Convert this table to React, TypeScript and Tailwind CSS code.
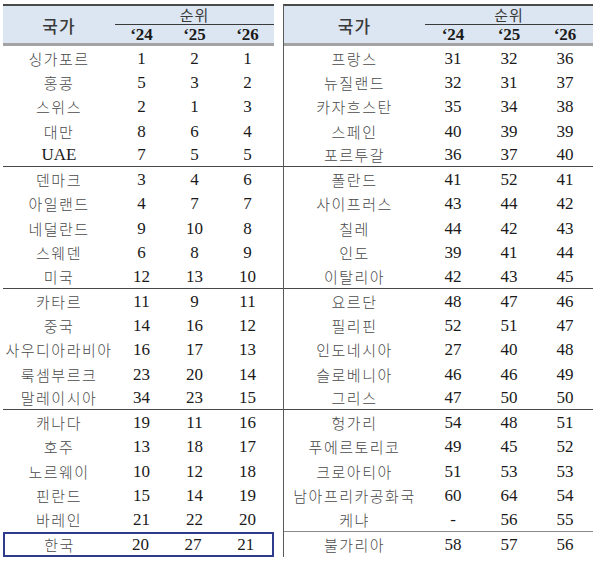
type Row = [string, string, string, string];

const LEFT: Row[] = [
  ['싱가포르', '1', '2', '1'],
  ['홍콩', '5', '3', '2'],
  ['스위스', '2', '1', '3'],
  ['대만', '8', '6', '4'],
  ['UAE', '7', '5', '5'],
  ['덴마크', '3', '4', '6'],
  ['아일랜드', '4', '7', '7'],
  ['네덜란드', '9', '10', '8'],
  ['스웨덴', '6', '8', '9'],
  ['미국', '12', '13', '10'],
  ['카타르', '11', '9', '11'],
  ['중국', '14', '16', '12'],
  ['사우디아라비아', '16', '17', '13'],
  ['룩셈부르크', '23', '20', '14'],
  ['말레이시아', '34', '23', '15'],
  ['캐나다', '19', '11', '16'],
  ['호주', '13', '18', '17'],
  ['노르웨이', '10', '12', '18'],
  ['핀란드', '15', '14', '19'],
  ['바레인', '21', '22', '20'],
  ['한국', '20', '27', '21'],
];

const RIGHT: Row[] = [
  ['프랑스', '31', '32', '36'],
  ['뉴질랜드', '32', '31', '37'],
  ['카자흐스탄', '35', '34', '38'],
  ['스페인', '40', '39', '39'],
  ['포르투갈', '36', '37', '40'],
  ['폴란드', '41', '52', '41'],
  ['사이프러스', '43', '44', '42'],
  ['칠레', '44', '42', '43'],
  ['인도', '39', '41', '44'],
  ['이탈리아', '42', '43', '45'],
  ['요르단', '48', '47', '46'],
  ['필리핀', '52', '51', '47'],
  ['인도네시아', '27', '40', '48'],
  ['슬로베니아', '46', '46', '49'],
  ['그리스', '47', '50', '50'],
  ['헝가리', '54', '48', '51'],
  ['푸에르토리코', '49', '45', '52'],
  ['크로아티아', '51', '53', '53'],
  ['남아프리카공화국', '60', '64', '54'],
  ['케냐', '-', '56', '55'],
  ['불가리아', '58', '57', '56'],
];

const KO = { fontFamily: '"Noto Sans CJK KR", "Noto Sans", sans-serif' };
const NUM = { fontFamily: '"Liberation Serif", "DejaVu Serif", serif' };

// Separator after each group of five rows
function rowBorder(i: number, side: 'left' | 'right') {
  if (i === 4 || i === 9 || i === 14) return 'border-b border-[#474747]';
  if (i === 19 && side === 'right') return 'border-b border-[#8a8a8a]';
  return '';
}

function Country({ name }: { name: string }) {
  const latin = /^[A-Z]+$/.test(name);
  return latin ? (
    <span className="text-[17px] leading-none text-[#1a1a1a]" style={NUM}>{name}</span>
  ) : (
    <span
      className="whitespace-nowrap text-[15px] font-light leading-none tracking-[1.5px] text-[#4a4a4a]"
      style={KO}
    >
      {name}
    </span>
  );
}

function Header({ countryW, colW }: { countryW: string; colW: string }) {
  return (
    <div className="flex h-[42px] border-t-2 border-b-[3px] border-t-[#4a4a4a] border-b-[#a3a3a3] bg-[#dce6f2]">
      <div className={`${countryW} flex items-center justify-center pt-[2px]`}>
        <span className="text-[17px] font-medium leading-none tracking-[1px] text-[#3a3a3a]" style={KO}>
          국가
        </span>
      </div>
      <div className="flex flex-1 flex-col">
        <div className="flex h-[19px] items-center justify-center border-b border-[#3a3a3a] pb-[2px]">
          <span className="text-[15px] leading-none tracking-[1px] text-[#3a3a3a]" style={KO}>
            순위
          </span>
        </div>
        <div className="flex flex-1 items-center pt-[1px]">
          {['‘24', '‘25', '‘26'].map((y) => (
            <div
              key={y}
              className={`${colW} text-center text-[17px] font-bold leading-none text-[#1a1a1a]`}
              style={NUM}
            >
              {y}
            </div>
          ))}
        </div>
      </div>
    </div>
  );
}

function Cells({ row, countryW, colW }: { row: Row; countryW: string; colW: string }) {
  return (
    <>
      <div className={`${countryW} flex justify-center`}>
        <Country name={row[0]} />
      </div>
      {row.slice(1).map((v, j) => (
        <div key={j} className={`${colW} text-center text-[17px] leading-none text-[#1a1a1a]`} style={NUM}>
          {v}
        </div>
      ))}
    </>
  );
}

export default function App() {
  return (
    <div className="flex h-[566px] w-[600px] bg-white pt-[4px]">
      {/* left table */}
      <div className="ml-[3px] w-[280px]">
        <div className="w-[271px]">
          <Header countryW="w-[112px]" colW="w-[53px]" />
        </div>
        {LEFT.map((row, i) =>
          i === 20 ? (
            <div key={row[0]} className="flex h-[25px] w-[271px] items-center border-2 border-[#2e3a8c]">
              <Cells row={row} countryW="w-[110px]" colW="w-[53px]" />
            </div>
          ) : (
            <div key={row[0]} className={`flex h-[24.3px] items-center ${rowBorder(i, 'left')}`}>
              <Cells row={row} countryW="w-[112px]" colW="w-[53px]" />
            </div>
          ),
        )}
      </div>

      {/* right table */}
      <div className="h-[553px] w-[310px] border-l border-[#5a5a5a]">
        <Header countryW="w-[141px]" colW="w-[56px]" />
        {RIGHT.map((row, i) => (
          <div key={row[0]} className={`flex h-[24.3px] items-center ${rowBorder(i, 'right')}`}>
            <Cells row={row} countryW="w-[141px]" colW="w-[56px]" />
          </div>
        ))}
      </div>
    </div>
  );
}
